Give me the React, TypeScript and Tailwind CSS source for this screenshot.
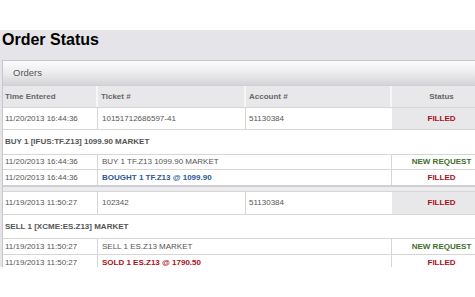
const font = { fontFamily: '"Liberation Sans", Arial, sans-serif' }

type Order = {
  time: string
  ticket: string
  account: string
  title: string
  request: string
  fill: string
  fillColor: string
}

const orders: Order[] = [
  {
    time: '11/20/2013 16:44:36',
    ticket: '10151712686597-41',
    account: '51130384',
    title: 'BUY 1 [IFUS:TF.Z13] 1099.90 MARKET',
    request: 'BUY 1 TF.Z13 1099.90 MARKET',
    fill: 'BOUGHT 1 TF.Z13 @ 1099.90',
    fillColor: 'text-[#2a5a98]',
  },
  {
    time: '11/19/2013 11:50:27',
    ticket: '102342',
    account: '51130384',
    title: 'SELL 1 [XCME:ES.Z13] MARKET',
    request: 'SELL 1 ES.Z13 MARKET',
    fill: 'SOLD 1 ES.Z13 @ 1790.50',
    fillColor: 'text-[#a8101a]',
  },
]

function OrderBlock({ o, first }: { o: Order; first: boolean }) {
  return (
    <>
      {/* main row */}
      <div className={`flex ${first ? 'h-[22px]' : 'h-[23px]'} border-t border-[#d6d6d6] bg-white`}>
        <div className="w-[95px] flex items-center pl-[2px] border-r border-[#d6d6d6]">{o.time}</div>
        <div className="w-[148px] flex items-center pl-[4px] border-r border-[#d6d6d6]">{o.ticket}</div>
        <div className="w-[146px] flex items-center pl-[3px]">{o.account}</div>
        <div className="w-[99px] flex items-center justify-center bg-[#e8e8ea] font-bold text-[#a8101a]">FILLED</div>
      </div>
      {/* order title */}
      <div className={`${first ? 'h-[25px]' : 'h-[24px]'} flex items-center pl-[2px] border-t border-[#d6d6d6] bg-white font-bold`}>
        {o.title}
      </div>
      {/* request */}
      <div className={`flex ${first ? 'h-[15px]' : 'h-[16px]'} border-t border-[#d6d6d6] bg-white`}>
        <div className="w-[95px] flex items-center pl-[2px] border-r border-[#d6d6d6]">{o.time}</div>
        <div className="w-[294px] flex items-center pl-[4px] border-r border-[#d6d6d6]">{o.request}</div>
        <div className="w-[99px] flex items-center justify-center font-bold text-[#3f6e2c]">NEW REQUEST</div>
      </div>
      {/* fill */}
      <div className="flex h-[16px] border-t border-[#d6d6d6] bg-white">
        <div className="w-[95px] flex items-center pl-[2px] border-r border-[#d6d6d6]">{o.time}</div>
        <div className={`w-[294px] flex items-center pl-[4px] border-r border-[#d6d6d6] font-bold ${o.fillColor}`}>{o.fill}</div>
        <div className="w-[99px] flex items-center justify-center font-bold text-[#a8101a]">FILLED</div>
      </div>
    </>
  )
}

export default function App() {
  return (
    <div className="w-[475px] h-[297px] overflow-hidden bg-white pt-[30px]" style={font}>
      <div className="h-[237px] overflow-hidden bg-[#e5e5e9]">
        {/* Title */}
        <h1 className="pl-[2px] text-[16px] leading-[20px] font-bold text-black">Order Status</h1>

        {/* Panel */}
        <div className="mt-[10px] ml-[2px] w-[490px] border-l border-t border-[#c8c8cc] text-[8px] text-[#555]">
          <div className="h-[25px] flex items-center pl-[10px] text-[9.5px] text-[#555] bg-gradient-to-b from-[#fcfcfc] via-[#ececee] to-[#d4d4d8] border-b border-[#d0d0d4]">
            Orders
          </div>

          {/* Column headers */}
          <div className="flex h-[21px] bg-[#e8e8ea] font-bold text-[#666]">
            <div className="w-[95px] flex items-center pl-[2px] border-r-2 border-[#f6f6f8]">Time Entered</div>
            <div className="w-[148px] flex items-center pl-[3px] border-r-2 border-[#f6f6f8]">Ticket #</div>
            <div className="w-[146px] flex items-center pl-[3px] border-r-2 border-[#f6f6f8]">Account #</div>
            <div className="w-[99px] flex items-center justify-center">Status</div>
          </div>

          <OrderBlock o={orders[0]} first />
          <div className="h-[6px] border-t-2 border-[#cfcfd3] bg-[#ececee]" />
          <OrderBlock o={orders[1]} first={false} />
        </div>
      </div>
    </div>
  )
}
